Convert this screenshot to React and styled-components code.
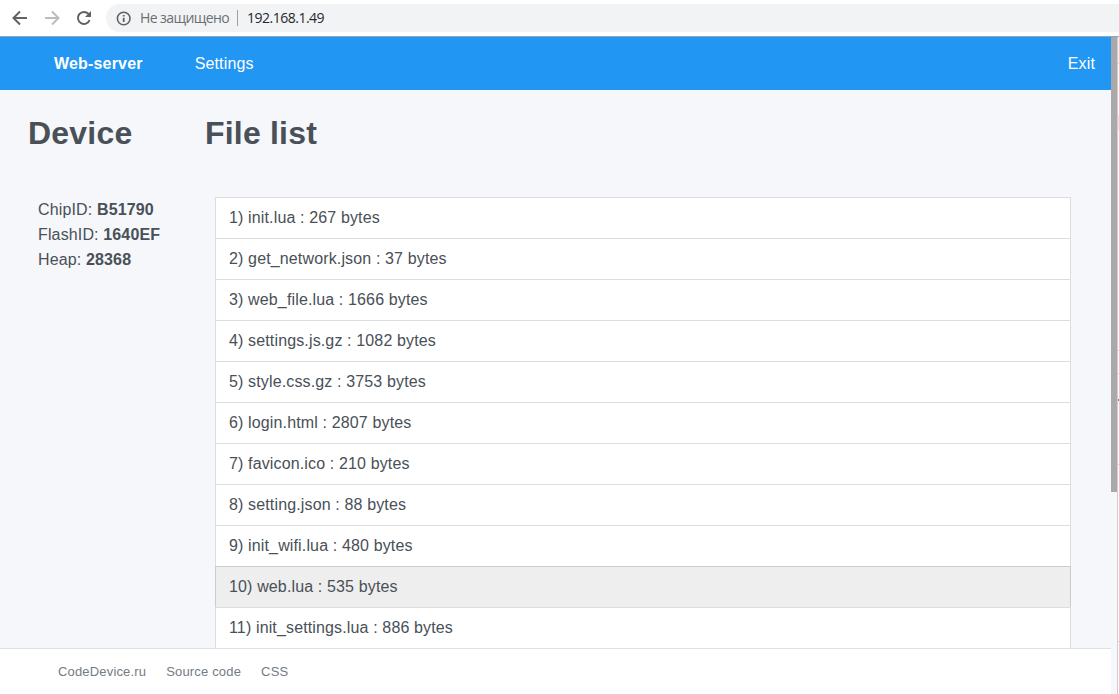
import React from 'react';
import styled, { createGlobalStyle, css } from 'styled-components';

const Global = createGlobalStyle`
  *, *::before, *::after { box-sizing: border-box; }
  html, body { margin: 0; padding: 0; overflow: hidden; }
  body {
    background: #fff;
    color: #495057;
    font: 16px/25px "Liberation Sans", Arial, sans-serif;
    letter-spacing: 0.14px;
  }
`;

const Browser = styled.div`
  width: 1119px;
  height: 694px;
  display: flex;
  flex-direction: column;
  overflow: hidden;
`;

const Toolbar = styled.header`
  height: 37px;
  flex: none;
  display: flex;
  align-items: flex-start;
  padding: 4px 0 0 10px;
  border-bottom: 1px solid #8fa5bd;
  background: #fff;
`;

const ToolButton = styled.button`
  width: 20px;
  height: 28px;
  margin-right: 12px;
  padding: 0;
  border: 0;
  background: none;
  display: flex;
  align-items: center;
  justify-content: center;
  color: ${(p) => (p.$muted ? '#babcbe' : '#5f6368')};
`;

const AddressBar = styled.div`
  flex: 1;
  height: 28px;
  display: flex;
  align-items: center;
  padding-left: 10px;
  border-radius: 14px 0 0 14px;
  background: #f1f3f4;
  font: 14px/28px "Open Sans", "Noto Sans", sans-serif;
  color: #6b6f74;
`;

const Security = styled.span`
  width: 97px;
  margin-left: 9px;
  white-space: nowrap;
  letter-spacing: -0.58px;
`;

const Divider = styled.span`
  width: 1px;
  height: 16px;
  background: #9aa0a6;
`;

const Url = styled.span`
  margin-left: 9px;
  color: #25282c;
  letter-spacing: -0.5px;
`;

const Viewport = styled.div`
  flex: 1;
  min-height: 0;
  display: flex;
`;

const Page = styled.div`
  width: 1111px;
  display: flex;
  flex-direction: column;
  background: #f5f7fb;
`;

const Nav = styled.nav`
  height: 53px;
  flex: none;
  display: flex;
  align-items: center;
  padding: 0 16px 0 54px;
  background: #2196f3;
  color: #fff;
`;

const NavLink = styled.a`
  color: inherit;
  font-weight: ${(p) => (p.$brand ? 700 : 400)};
  margin-right: ${(p) => (p.$brand ? '52px' : 0)};
  margin-left: ${(p) => (p.$end ? 'auto' : 0)};
  letter-spacing: ${(p) => (p.$brand ? '0.18px' : '0.14px')};
`;

const Main = styled.main`
  flex: 1;
  min-height: 0;
  display: flex;
  overflow: hidden;
  padding: 23px 40px 0 28px;
`;

const Column = styled.section`
  flex: ${(p) => (p.$wide ? '1' : '0 0 177px')};
`;

const Title = styled.h1`
  margin: 0;
  font-size: 32px;
  line-height: 40px;
  font-weight: 700;
  letter-spacing: 0.2px;
`;

const Facts = styled.dl`
  margin: 44px 0 0 10px;
`;

const Fact = styled.div`
  display: flex;
  gap: 4.6px;
  height: 25px;

  dt, dd { margin: 0; }
  dd { font-weight: 700; }
`;

const FileList = styled.ul`
  list-style: none;
  margin: 44px 0 0 10px;
  padding: 0;
`;

const FileRow = styled.li`
  height: 41px;
  padding: 0 13px;
  line-height: 40px;
  border: 1px solid #dcdddf;
  border-bottom: 0;
  background: #fff;

  ${(p) => p.$active && css`
    background: #eee;
    border-color: #cbcccd;
  `}
`;

const Footer = styled.footer`
  height: 46px;
  flex: none;
  display: flex;
  gap: 20px;
  padding-left: 58px;
  border-top: 1px solid #dee0e3;
  background: #fff;
  color: #747b83;
  font-size: 13px;
  line-height: 45px;
  letter-spacing: 0.17px;
`;

const Scrollbar = styled.div`
  width: 7px;
  background: #f5f7fb;
  border-right: 1px solid #cfcfcf;
`;

const Thumb = styled.div`
  height: 455px;
  width: 6px;
  background: #a9a9a9;
`;

const WindowEdge = styled.div`
  width: 1px;
  background: linear-gradient(
    #f2f2f2 0 26px, #cfcfcf 26px 27px, #fff 27px 78px, #e4e4e4 78px 93px,
    #fff 93px 313px, #d5d5d5 313px 314px, #fff 314px 336px, #d5d5d5 336px 337px,
    #fff 337px 362px, #35a3c4 362px 364px, #fff 364px 427px, #d0d0d0 427px 428px,
    #fff 428px 604px, #d0d0d0 604px 605px, #fff 605px
  );
`;

const files = [
  ['init.lua', 267],
  ['get_network.json', 37],
  ['web_file.lua', 1666],
  ['settings.js.gz', 1082],
  ['style.css.gz', 3753],
  ['login.html', 2807],
  ['favicon.ico', 210],
  ['setting.json', 88],
  ['init_wifi.lua', 480],
  ['web.lua', 535],
  ['init_settings.lua', 886],
];

const device = [
  ['ChipID', 'B51790'],
  ['FlashID', '1640EF'],
  ['Heap', '28368'],
];

const ArrowIcon = ({ flip }) => (
  <svg width="20" height="20" viewBox="0 0 20 20" fill="none" stroke="currentColor" strokeWidth="2">
    <path d={flip ? 'M3 10h13M10 3.5l6.5 6.5l-6.5 6.5' : 'M17 10H4M10 3.5L3.5 10l6.5 6.5'} />
  </svg>
);

const ReloadIcon = () => (
  <svg width="20" height="20" viewBox="0 0 20 20" fill="none">
    <path d="M15.6 12A6 6 0 1 1 14.4 5.9L16 7.5" stroke="currentColor" strokeWidth="2" />
    <path d="M17 3v6h-6z" fill="currentColor" />
  </svg>
);

const InfoIcon = () => (
  <svg width="15" height="15" viewBox="0 0 15 15" fill="none">
    <circle cx="7.7" cy="7.5" r="6.3" stroke="#5f6368" strokeWidth="1.6" />
    <path d="M7.7 6.8v4.2M7.7 4v1.6" stroke="#5f6368" strokeWidth="1.8" />
  </svg>
);

export default function App() {
  return (
    <>
      <Global />
      <Browser>
        <Toolbar>
          <ToolButton aria-label="Back"><ArrowIcon /></ToolButton>
          <ToolButton aria-label="Forward" $muted><ArrowIcon flip /></ToolButton>
          <ToolButton aria-label="Reload"><ReloadIcon /></ToolButton>
          <AddressBar>
            <InfoIcon />
            <Security>Не защищено</Security>
            <Divider />
            <Url>192.168.1.49</Url>
          </AddressBar>
        </Toolbar>
        <Viewport>
          <Page>
            <Nav>
              <NavLink $brand>Web-server</NavLink>
              <NavLink>Settings</NavLink>
              <NavLink $end>Exit</NavLink>
            </Nav>
            <Main>
              <Column>
                <Title>Device</Title>
                <Facts>
                  {device.map(([name, value]) => (
                    <Fact key={name}>
                      <dt>{name}:</dt>
                      <dd>{value}</dd>
                    </Fact>
                  ))}
                </Facts>
              </Column>
              <Column $wide>
                <Title>File list</Title>
                <FileList>
                  {files.map(([name, size], i) => (
                    <FileRow key={name} $active={i === 9}>
                      {`${i + 1}) ${name} : ${size} bytes`}
                    </FileRow>
                  ))}
                </FileList>
              </Column>
            </Main>
            <Footer>
              <span>CodeDevice.ru</span>
              <span>Source code</span>
              <span>CSS</span>
            </Footer>
          </Page>
          <Scrollbar><Thumb /></Scrollbar>
          <WindowEdge />
        </Viewport>
      </Browser>
    </>
  );
}
